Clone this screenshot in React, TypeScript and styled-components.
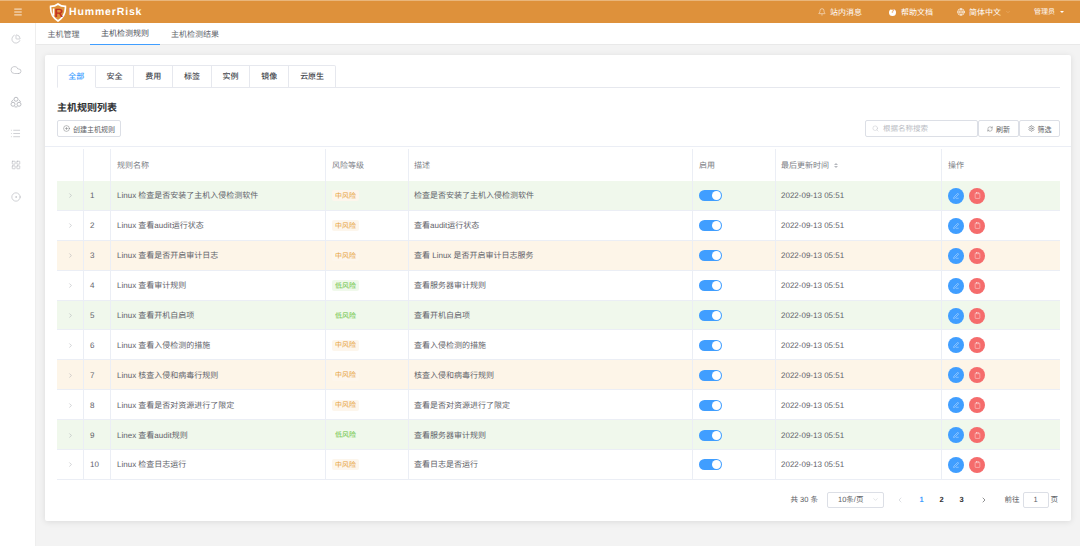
import React from 'react';
import styled, { createGlobalStyle } from 'styled-components';
import {
  Bell,
  ChevronDown,
  ChevronLeft,
  ChevronRight,
  ChartPie,
  CirclePlus,
  Cloud,
  Clipboard,
  Globe,
  LayoutGrid,
  List,
  Menu,
  PenLine,
  RefreshCw,
  Search,
  Settings,
  CircleDot,
} from 'lucide-react';

const GlobalStyle = createGlobalStyle`
  html, body {
    margin: 0;
    padding: 0;
    background: #f3f3f3;
    font-family: "Liberation Sans", "Noto Sans CJK SC", sans-serif;
    color: #606266;
    text-rendering: geometricPrecision;
  }
  * { box-sizing: border-box; }
`;

const Page = styled.div`
  width: 1080px;
  height: 546px;
  overflow: hidden;
  display: flex;
  flex-direction: column;
`;

const TopBar = styled.header`
  height: 23px;
  flex: none;
  background: #de913b;
  border-top: 1px solid #e9b67c;
  color: #fff;
  display: flex;
  align-items: center;
  padding-left: 13px;
  font-size: 8px;
`;

const Logo = styled.div`
  margin-left: 26px;
  display: flex;
  align-items: center;
  gap: 2px;
  font-size: 10.5px;
  font-weight: 700;
  letter-spacing: 0.85px;
`;

const TopLinks = styled.nav`
  margin-left: auto;
  display: flex;
  align-items: center;
`;

const TopLink = styled.span<{ $w: number }>`
  display: flex;
  align-items: center;
  gap: 4px;
  width: ${(p) => p.$w}px;
`;

const HelpDot = styled.span`
  width: 7px;
  height: 7px;
  border-radius: 50%;
  background: #fff;
  color: #de913b;
  font-size: 6px;
  font-weight: 700;
  line-height: 7px;
  text-align: center;
  margin-right: 1px;
`;

const AdminName = styled.span`
  font-size: 7px;
`;

const Caret = styled.span`
  width: 0;
  height: 0;
  border-left: 2px solid transparent;
  border-right: 2px solid transparent;
  border-top: 2.5px solid #fff;
  margin-left: 1px;
`;

const FaintChevron = styled.span`
  display: flex;
  color: #eec08c;
`;

const Body = styled.div`
  flex: 1;
  display: flex;
  min-height: 0;
`;

const SideBar = styled.aside`
  width: 36px;
  flex: none;
  background: #fff;
  color: #b0b2b8;
  display: flex;
  flex-direction: column;
  border-right: 1px solid #eeeeee;
`;

const SideIcon = styled.span`
  height: 31.6px;
  width: 31px;
  display: flex;
  align-items: center;
  justify-content: center;
`;

const Main = styled.main`
  flex: 1;
  display: flex;
  flex-direction: column;
  min-width: 0;
`;

const SubNav = styled.nav`
  height: 22px;
  flex: none;
  background: #fff;
  display: flex;
  border-bottom: 1px solid #e9e9e9;
  padding-left: 1px;
  font-size: 8px;
`;

const SubTab = styled.a<{ $on?: boolean }>`
  width: 70px;
  height: 22px;
  display: flex;
  align-items: center;
  justify-content: center;
  color: ${(p) => (p.$on ? '#4d5058' : '#62656c')};
  border-bottom: ${(p) => (p.$on ? '1px solid #409eff' : 'none')};
  &:first-child { width: 53px; }
`;

const Content = styled.div`
  flex: 1;
  padding: 10px 9px 25px 9px;
  min-height: 0;
`;

const Card = styled.section`
  height: 466px;
  background: #fff;
  border-radius: 2px;
  box-shadow: 0 1px 6px rgba(0, 0, 0, 0.1);
  padding: 10px 11px 0 12px;
`;

const Tabs = styled.div`
  display: flex;
  height: 23px;
  border-bottom: 1px solid #e6e8ee;
`;

const Tab = styled.div<{ $on?: boolean }>`
  width: 38.7px;
  height: 23px;
  display: flex;
  align-items: center;
  justify-content: center;
  font-size: 8px;
  font-weight: 500;
  color: ${(p) => (p.$on ? '#409eff' : '#43464d')};
  background: #fff;
  border: 1px solid #e6e8ee;
  border-left-width: ${(p) => (p.$on ? 1 : 0)}px;
  border-bottom-color: ${(p) => (p.$on ? '#fff' : '#e6e8ee')};
  &:first-child { border-top-left-radius: 2px; }
  &:last-child { border-top-right-radius: 2px; width: 47px; }
`;

const Title = styled.h2`
  margin: 15px 0 0;
  font-size: 10px;
  line-height: 12px;
  font-weight: 700;
  color: #303133;
`;

const Toolbar = styled.div`
  margin: 5px -11px 0 -12px;
  padding: 0 11px 9px 12px;
  height: 27px;
  display: flex;
  align-items: flex-end;
  justify-content: space-between;
  border-bottom: 1px solid #ebeef5;
`;

const Btn = styled.button<{ $w: number }>`
  width: ${(p) => p.$w}px;
  height: 17px;
  padding: 0;
  background: #fff;
  border: 1px solid #dcdfe6;
  border-radius: 2px;
  color: #606266;
  display: flex;
  align-items: center;
  justify-content: center;
  gap: 3px;
  font: inherit;
  font-size: 7px;
`;

const ToolRight = styled.div`
  display: flex;
`;

const SearchBox = styled.div`
  width: 113px;
  height: 17px;
  border: 1px solid #dcdfe6;
  border-radius: 2px;
  display: flex;
  align-items: center;
  gap: 4px;
  padding-left: 6px;
  font-size: 7.5px;
  color: #b9bcc3;
`;

const Row = styled.div<{ $tone?: 'green' | 'orange' }>`
  display: grid;
  grid-template-columns: 27px 27px 215px 83px 284px 83px 166px 118px;
  height: 29.9px;
  background: ${(p) =>
    p.$tone === 'green' ? '#f0f8ec' : p.$tone === 'orange' ? '#fdf5e8' : '#fff'};
  border-bottom: 1px solid #ebeef5;
  font-size: 8px;
  color: #5f6269;
`;

const HeadRow = styled(Row)`
  height: 34px;
  padding-top: 2px;
  color: #7b7e85;
  border-bottom: none;
`;

const Cell = styled.div<{ $pad?: number }>`
  display: flex;
  align-items: center;
  gap: 5px;
  padding-top: 1px;
  padding-left: ${(p) => p.$pad ?? 6}px;
  border-right: 1px solid #ebeef5;
  white-space: nowrap;
  &:last-child { border-right: none; }
`;

const ExpandCell = styled(Cell)`
  padding-left: 10px;
  color: #9a9da4;
`;

const Risk = styled.span<{ $low?: boolean }>`
  height: 11px;
  padding: 0 3px;
  display: inline-flex;
  align-items: center;
  border-radius: 2px;
  font-size: 7px;
  color: ${(p) => (p.$low ? '#67c23a' : '#e6a23c')};
  background: ${(p) => (p.$low ? '#f0f9eb' : '#fdf6ec')};
`;

const Toggle = styled.span`
  width: 23px;
  height: 11px;
  border-radius: 6px;
  background: #409eff;
  display: flex;
  justify-content: flex-end;
  align-items: center;
  padding-right: 1px;
  &::after {
    content: '';
    width: 9px;
    height: 9px;
    border-radius: 50%;
    background: #fff;
  }
`;

const RoundBtn = styled.span<{ $red?: boolean }>`
  width: 16px;
  height: 16px;
  border-radius: 50%;
  background: ${(p) => (p.$red ? '#f56c6c' : '#409eff')};
  color: #fff;
  display: flex;
  align-items: center;
  justify-content: center;
`;

const SortMark = styled.span`
  display: inline-flex;
  flex-direction: column;
  gap: 1px;
  &::before, &::after {
    content: '';
    width: 0;
    height: 0;
    border-left: 2px solid transparent;
    border-right: 2px solid transparent;
  }
  &::before { border-bottom: 2.5px solid #b5b8be; }
  &::after { border-top: 2.5px solid #b5b8be; }
`;

const Pager = styled.div`
  display: flex;
  align-items: center;
  justify-content: flex-end;
  height: 40px;
  padding-right: 2px;
  font-size: 7.5px;
  color: #606266;
`;

const SizeSelect = styled.div`
  width: 57px;
  height: 16px;
  margin-left: 9px;
  border: 1px solid #dcdfe6;
  border-radius: 2px;
  display: flex;
  align-items: center;
  justify-content: space-between;
  padding: 0 4px 0 10px;
  color: #bcc0c7;
`;

const SizeLabel = styled.span`
  color: #606266;
`;

const PageNum = styled.span<{ $on?: boolean }>`
  width: 20px;
  text-align: center;
  font-weight: 700;
  color: ${(p) => (p.$on ? '#409eff' : '#303133')};
`;

const PagerArrow = styled.span<{ $off?: boolean; $l: number; $r: number }>`
  display: flex;
  margin: 0 ${(p) => p.$r}px 0 ${(p) => p.$l}px;
  color: ${(p) => (p.$off ? '#c0c4cc' : '#303133')};
`;

const Jump = styled.span`
  width: 26px;
  height: 16px;
  margin: 0 2px 0 3px;
  border: 1px solid #dcdfe6;
  border-radius: 2px;
  display: flex;
  align-items: center;
  justify-content: center;
`;

const LogoMark = () => (
  <svg width="18" height="19" viewBox="0 0 18 19" fill="none">
    <path d="M1.6 3.4 Q6 3.4 9 1 Q12 3.4 16.4 3.4 Q17 13 9 18 Q1 13 1.6 3.4Z" stroke="#fff" strokeWidth="1.7" />
    <path d="M4.6 5.5 V12.5" stroke="#fff" strokeWidth="1.6" />
    <text x="5.6" y="14" fontSize="12" fontWeight="700" fill="#c2331f" fontFamily="Liberation Sans">R</text>
  </svg>
);

const TeamIcon = () => (
  <svg width="12" height="12" viewBox="0 0 24 24" fill="none" stroke="currentColor" strokeWidth="1.7">
    <circle cx="12" cy="6.5" r="4" />
    <circle cx="6" cy="16.5" r="4" />
    <circle cx="18" cy="16.5" r="4" />
    <path d="M6.5 7.5 A9.5 9.5 0 0 0 3 12 M17.5 7.5 A9.5 9.5 0 0 1 21 12 M9 21.5 A10 10 0 0 0 15 21.5" />
  </svg>
);

type Rule = { name: string; desc: string; low?: boolean; tone?: 'green' | 'orange' };

const rules: Rule[] = [
  { name: 'Linux 检查是否安装了主机入侵检测软件', desc: '检查是否安装了主机入侵检测软件', tone: 'green' },
  { name: 'Linux 查看audit运行状态', desc: '查看audit运行状态' },
  { name: 'Linux 查看是否开启审计日志', desc: '查看 Linux 是否开启审计日志服务', tone: 'orange' },
  { name: 'Linux 查看审计规则', desc: '查看服务器审计规则', low: true },
  { name: 'Linux 查看开机自启项', desc: '查看开机自启项', low: true, tone: 'green' },
  { name: 'Linux 查看入侵检测的措施', desc: '查看入侵检测的措施' },
  { name: 'Linux 核查入侵和病毒行规则', desc: '核查入侵和病毒行规则', tone: 'orange' },
  { name: 'Linux 查看是否对资源进行了限定', desc: '查看是否对资源进行了限定' },
  { name: 'Linex 查看audit规则', desc: '查看服务器审计规则', low: true, tone: 'green' },
  { name: 'Linux 检查日志运行', desc: '查看日志是否运行' },
];

const App: React.FC = () => {
  return (
    <Page>
      <GlobalStyle />
      <TopBar>
        <Menu size={10} strokeWidth={2} />
        <Logo>
          <LogoMark />
          HummerRisk
        </Logo>
        <TopLinks>
          <TopLink $w={71}>
            <Bell size={8} strokeWidth={1.5} />
            站内消息
          </TopLink>
          <TopLink $w={68}>
            <HelpDot>?</HelpDot>
            帮助文档
          </TopLink>
          <TopLink $w={77}>
            <Globe size={8} strokeWidth={2} />
            简体中文
            <FaintChevron>
              <ChevronDown size={6} strokeWidth={1.5} />
            </FaintChevron>
          </TopLink>
          <TopLink $w={46}>
            <AdminName>管理员</AdminName>
            <Caret />
          </TopLink>
        </TopLinks>
      </TopBar>
      <Body>
        <SideBar>
          <SideIcon><ChartPie size={10} strokeWidth={1.4} /></SideIcon>
          <SideIcon><Cloud size={12} strokeWidth={1.3} /></SideIcon>
          <SideIcon><TeamIcon /></SideIcon>
          <SideIcon><List size={11} strokeWidth={1.3} /></SideIcon>
          <SideIcon><LayoutGrid size={10} strokeWidth={1.4} /></SideIcon>
          <SideIcon><CircleDot size={10} strokeWidth={1.4} /></SideIcon>
        </SideBar>
        <Main>
          <SubNav>
            <SubTab>主机管理</SubTab>
            <SubTab $on>主机检测规则</SubTab>
            <SubTab>主机检测结果</SubTab>
          </SubNav>
          <Content>
            <Card>
              <Tabs>
                <Tab $on>全部</Tab>
                <Tab>安全</Tab>
                <Tab>费用</Tab>
                <Tab>标签</Tab>
                <Tab>实例</Tab>
                <Tab>镜像</Tab>
                <Tab>云原生</Tab>
              </Tabs>
              <Title>主机规则列表</Title>
              <Toolbar>
                <Btn $w={64}>
                  <CirclePlus size={7} strokeWidth={1.4} />
                  创建主机规则
                </Btn>
                <ToolRight>
                  <SearchBox>
                    <Search size={7} strokeWidth={1.4} />
                    根据名称搜索
                  </SearchBox>
                  <Btn $w={41}>
                    <RefreshCw size={6} strokeWidth={1.6} />
                    刷新
                  </Btn>
                  <Btn $w={41}>
                    <Settings size={7} strokeWidth={1.6} />
                    筛选
                  </Btn>
                </ToolRight>
              </Toolbar>
              <HeadRow>
                <Cell />
                <Cell />
                <Cell>规则名称</Cell>
                <Cell>风险等级</Cell>
                <Cell $pad={5}>描述</Cell>
                <Cell>启用</Cell>
                <Cell $pad={5}>
                  最后更新时间
                  <SortMark />
                </Cell>
                <Cell>操作</Cell>
              </HeadRow>
              {rules.map((r, i) => (
                <Row key={i} $tone={r.tone}>
                  <ExpandCell>
                    <ChevronRight size={7} strokeWidth={1.5} />
                  </ExpandCell>
                  <Cell>{i + 1}</Cell>
                  <Cell>{r.name}</Cell>
                  <Cell>
                    <Risk $low={r.low}>{r.low ? '低风险' : '中风险'}</Risk>
                  </Cell>
                  <Cell $pad={5}>{r.desc}</Cell>
                  <Cell>
                    <Toggle />
                  </Cell>
                  <Cell $pad={5}>2022-09-13 05:51</Cell>
                  <Cell>
                    <RoundBtn>
                      <PenLine size={6} strokeWidth={1.5} />
                    </RoundBtn>
                    <RoundBtn $red>
                      <Clipboard size={7} strokeWidth={1.4} />
                    </RoundBtn>
                  </Cell>
                </Row>
              ))}
              <Pager>
                <span>共 30 条</span>
                <SizeSelect>
                  <SizeLabel>10条/页</SizeLabel>
                  <ChevronDown size={7} strokeWidth={1.4} />
                </SizeSelect>
                <PagerArrow $off $l={12} $r={7.5}>
                  <ChevronLeft size={8} strokeWidth={1.6} />
                </PagerArrow>
                <PageNum $on>1</PageNum>
                <PageNum>2</PageNum>
                <PageNum>3</PageNum>
                <PagerArrow $l={8} $r={17}>
                  <ChevronRight size={8} strokeWidth={1.6} />
                </PagerArrow>
                <span>前往</span>
                <Jump>1</Jump>
                <span>页</span>
              </Pager>
            </Card>
          </Content>
        </Main>
      </Body>
    </Page>
  );
};

export default App;
